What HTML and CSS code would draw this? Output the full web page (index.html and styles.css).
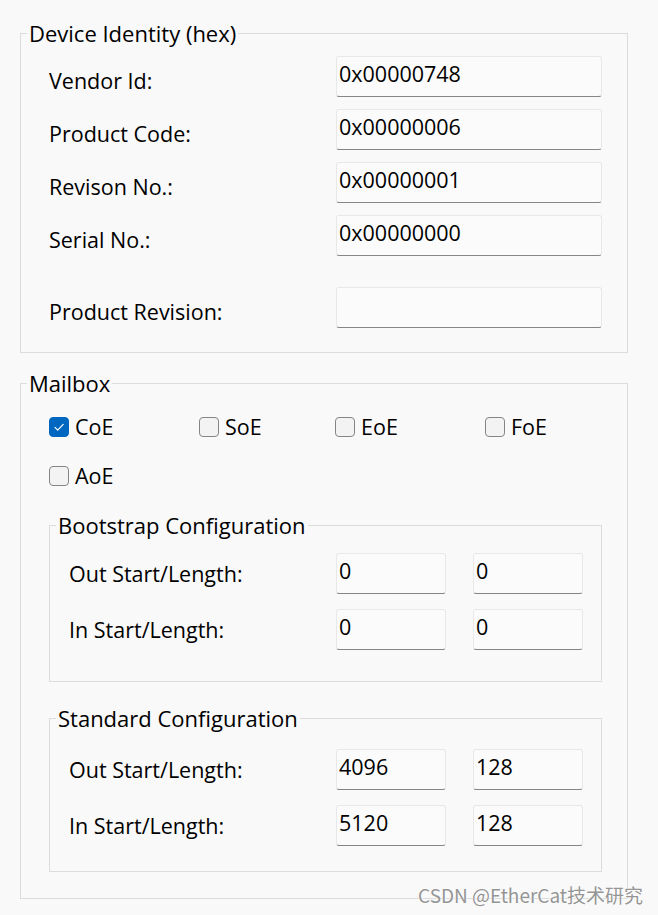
FILE: index.html
```html
<!DOCTYPE html>
<html lang="en">

<head>
    <meta charset="UTF-8">
    <meta name="viewport" content="width=device-width, initial-scale=1.0">
    <title>Device Identity</title>
    <link rel="stylesheet" href="styles.css">
</head>

<body>
    <div class="panel">
        <fieldset class="group">
            <legend>Device Identity (hex)</legend>
            <div class="group-body id-grid">
                <label class="field-label" for="vendorId">Vendor Id:</label>
                <input class="field" type="text" id="vendorId" value="0x00000748">

                <label class="field-label" for="productCode">Product Code:</label>
                <input class="field" type="text" id="productCode" value="0x00000006">

                <label class="field-label" for="revisionNo">Revison No.:</label>
                <input class="field" type="text" id="revisionNo" value="0x00000001">

                <label class="field-label" for="serialNo">Serial No.:</label>
                <input class="field" type="text" id="serialNo" value="0x00000000">

                <label class="field-label spaced" for="productRevision">Product Revision:</label>
                <input class="field spaced" type="text" id="productRevision" value="">
            </div>
        </fieldset>

        <fieldset class="group mailbox">
            <legend>Mailbox</legend>
            <div class="group-body mailbox-body">
                <div class="protocols">
                    <label class="check">
                        <span class="box checked">
                            <svg width="20" height="20" viewBox="0 0 20 20">
                                <path d="M6 10.4 L8.7 13.1 L14.2 7.4" fill="none" stroke="#fff" stroke-width="1.2" stroke-linecap="round" stroke-linejoin="round"/>
                            </svg>
                        </span>
                        CoE
                    </label>
                    <label class="check"><span class="box"></span>SoE</label>
                    <label class="check"><span class="box"></span>EoE</label>
                    <label class="check"><span class="box"></span>FoE</label>
                    <label class="check"><span class="box"></span>AoE</label>
                </div>

                <fieldset class="group sub-group">
                    <legend>Bootstrap Configuration</legend>
                    <div class="sub-body">
                        <label class="field-label" for="bootOutStart">Out Start/Length:</label>
                        <input class="field" type="text" id="bootOutStart" value="0">
                        <input class="field" type="text" id="bootOutLength" value="0">

                        <label class="field-label" for="bootInStart">In Start/Length:</label>
                        <input class="field" type="text" id="bootInStart" value="0">
                        <input class="field" type="text" id="bootInLength" value="0">
                    </div>
                </fieldset>

                <fieldset class="group sub-group standard">
                    <legend>Standard Configuration</legend>
                    <div class="sub-body">
                        <label class="field-label" for="stdOutStart">Out Start/Length:</label>
                        <input class="field" type="text" id="stdOutStart" value="4096">
                        <input class="field" type="text" id="stdOutLength" value="128">

                        <label class="field-label" for="stdInStart">In Start/Length:</label>
                        <input class="field" type="text" id="stdInStart" value="5120">
                        <input class="field" type="text" id="stdInLength" value="128">
                    </div>
                </fieldset>
            </div>
        </fieldset>

        <div class="watermark">CSDN @EtherCat技术研究</div>
    </div>
</body>

</html>
```

FILE: styles.css
```css
body {
    margin: 0;
    background: #f9f9f9;
    color: #000;
    font-family: "Open Sans", "Noto Sans", sans-serif;
    font-size: 21.5px;
    line-height: 28px;
}

.panel {
    position: relative;
    padding: 19px 30px 16px 20px;
}

.group {
    margin: 0;
    padding: 0;
    min-width: 0;
    border: 1px solid #dcdcdc;
}

.group legend {
    margin-left: 6px;
    padding: 0 2px;
    font-size: 22px;
    line-height: 28px;
}

.group-body {
    padding: 9px 25px 24px 28px;
}

.id-grid {
    display: grid;
    grid-template-columns: 1fr 266px;
    row-gap: 12px;
}

.id-grid .field-label {
    margin-top: 8px;
}

.id-grid .spaced {
    margin-top: 19px;
}

.id-grid .field-label.spaced {
    margin-top: 27px;
}

.field-label {
    align-self: center;
    white-space: nowrap;
}

.field {
    box-sizing: border-box;
    width: 100%;
    height: 41px;
    margin: 0;
    padding: 2px 3px 9px 2px;
    font-family: inherit;
    font-size: 21.5px;
    line-height: 28px;
    color: #000;
    background: #fbfbfb;
    border: 1px solid #e8e8e8;
    border-bottom-color: #868686;
    border-radius: 3px;
    outline: none;
}

.mailbox {
    margin-top: 16px;
}

.mailbox-body {
    padding: 16px 25px 26px 28px;
}

.protocols {
    display: grid;
    grid-template-columns: 150px 136px 150px auto;
    row-gap: 21px;
}

.check {
    display: flex;
    align-items: center;
    gap: 6px;
}

.box {
    box-sizing: border-box;
    width: 20px;
    height: 20px;
    border: 1px solid #858585;
    border-radius: 4px;
    background: #f3f3f3;
}

.box.checked {
    border-color: #0067c0;
    background: #0067c0;
}

.box svg {
    display: block;
    margin: -1px;
}

.sub-group {
    margin-top: 21px;
}

.sub-group.standard {
    margin-top: 22px;
}

.sub-body {
    display: grid;
    grid-template-columns: 1fr 110px 110px;
    column-gap: 27px;
    row-gap: 15px;
    padding: 14px 18px 31px 19px;
}

.standard .sub-body {
    padding-top: 17px;
    padding-bottom: 25px;
}

.watermark {
    position: absolute;
    right: 15px;
    bottom: 9px;
    font-family: "Noto Sans CJK SC", sans-serif;
    font-size: 19px;
    line-height: 22px;
    color: #959595;
    text-shadow: 0 0 2px #fff, 0 0 2px #fff;
}
```
